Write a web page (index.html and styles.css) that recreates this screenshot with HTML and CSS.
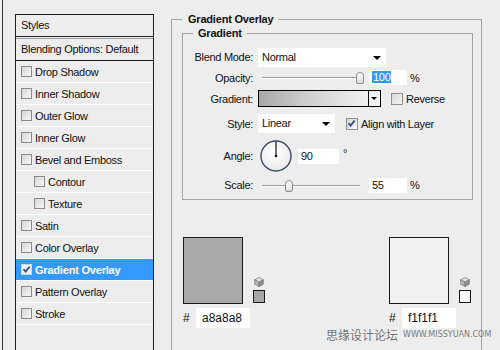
FILE: index.html
```html
<!DOCTYPE html>
<html>
<head>
<meta charset="utf-8">
<link rel="stylesheet" href="styles.css">
</head>
<body>
<div class="app">
  <aside class="sidebar">
    <div class="styles-box">
      <div class="styles-head">Styles</div>
      <div class="blend-opt">Blending Options: Default</div>
      <ul class="fx-list">
        <li class="fx"><span class="cb"></span>Drop Shadow</li>
        <li class="fx"><span class="cb"></span>Inner Shadow</li>
        <li class="fx"><span class="cb"></span>Outer Glow</li>
        <li class="fx"><span class="cb"></span>Inner Glow</li>
        <li class="fx"><span class="cb"></span>Bevel and Emboss</li>
        <li class="fx sub"><span class="cb"></span>Contour</li>
        <li class="fx sub"><span class="cb"></span>Texture</li>
        <li class="fx"><span class="cb"></span>Satin</li>
        <li class="fx"><span class="cb"></span>Color Overlay</li>
        <li class="fx active"><span class="cb checked"><svg viewBox="0 0 11 11" width="11" height="11"><path d="M2.5 5.2 L4.6 7.6 L8.6 2.6" fill="none" stroke="#3a4a8c" stroke-width="1.8"/></svg></span>Gradient Overlay</li>
        <li class="fx"><span class="cb"></span>Pattern Overlay</li>
        <li class="fx"><span class="cb"></span>Stroke</li>
      </ul>
    </div>
  </aside>
  <main class="panel">
    <fieldset class="group outer">
      <legend>Gradient Overlay</legend>
      <fieldset class="group inner">
        <legend>Gradient</legend>
        <div class="form">
          <span class="lbl">Blend Mode:</span>
          <div class="ctl"><div class="select blend">Normal<span class="arrow"></span></div></div>

          <span class="lbl">Opacity:</span>
          <div class="ctl">
            <div class="slider"><span class="track"></span><span class="thumb" style="left:98px"></span></div>
            <div class="field num"><span class="sel">100</span></div>
            <span class="unit">%</span>
          </div>

          <span class="lbl">Gradient:</span>
          <div class="ctl">
            <div class="grad-picker"><span class="grad-fill"></span><span class="grad-btn"><span class="arrow small"></span></span></div>
            <span class="cb light rev"></span><span class="cb-text">Reverse</span>
          </div>

          <span class="lbl">Style:</span>
          <div class="ctl">
            <div class="select style">Linear<span class="arrow"></span></div>
            <span class="cb light checked align"><svg viewBox="0 0 11 11" width="11" height="11"><path d="M2.5 5.2 L4.6 7.6 L8.6 2.6" fill="none" stroke="#3a4a8c" stroke-width="1.8"/></svg></span><span class="cb-text">Align with Layer</span>
          </div>

          <span class="lbl">Angle:</span>
          <div class="ctl">
            <svg class="dial" viewBox="0 0 32 32" width="32" height="32">
              <defs><radialGradient id="dg" cx="0.45" cy="0.4" r="0.7"><stop offset="0" stop-color="#ffffff"/><stop offset="1" stop-color="#e6e6e6"/></radialGradient></defs>
              <circle cx="16" cy="16" r="15" fill="url(#dg)" stroke="#3c4a68" stroke-width="1.4"/>
              <line x1="16" y1="16" x2="16" y2="1.5" stroke="#111" stroke-width="1.2"/>
              <circle cx="16" cy="16" r="1.3" fill="#111"/>
            </svg>
            <div class="field angle">90</div>
            <span class="deg">°</span>
          </div>

          <span class="lbl">Scale:</span>
          <div class="ctl">
            <div class="slider"><span class="track"></span><span class="thumb" style="left:27px"></span></div>
            <div class="field num">55</div>
            <span class="unit">%</span>
          </div>
        </div>
      </fieldset>

      <div class="stops">
        <div class="stop">
          <div class="stop-top">
            <div class="swatch big" style="background:#a8a8a8"></div>
            <div class="stop-side">
              <svg class="cube" viewBox="0 0 10 10" width="10" height="10"><path d="M5 0.5 L9.3 2.8 L5 5.1 L0.7 2.8 Z" fill="#e4e4e4" stroke="#777" stroke-width="0.7"/><path d="M0.7 2.8 L5 5.1 L5 9.6 L0.7 7.3 Z" fill="#b4b4b4" stroke="#777" stroke-width="0.7"/><path d="M9.3 2.8 L5 5.1 L5 9.6 L9.3 7.3 Z" fill="#8e8e8e" stroke="#777" stroke-width="0.7"/></svg>
              <div class="swatch small" style="background:#a8a8a8"></div>
            </div>
          </div>
          <div class="hex"><span class="hash">#</span><div class="field hexval">a8a8a8</div></div>
        </div>
        <div class="stop">
          <div class="stop-top">
            <div class="swatch big" style="background:#f1f1f1"></div>
            <div class="stop-side">
              <svg class="cube" viewBox="0 0 10 10" width="10" height="10"><path d="M5 0.5 L9.3 2.8 L5 5.1 L0.7 2.8 Z" fill="#e4e4e4" stroke="#777" stroke-width="0.7"/><path d="M0.7 2.8 L5 5.1 L5 9.6 L0.7 7.3 Z" fill="#b4b4b4" stroke="#777" stroke-width="0.7"/><path d="M9.3 2.8 L5 5.1 L5 9.6 L9.3 7.3 Z" fill="#8e8e8e" stroke="#777" stroke-width="0.7"/></svg>
              <div class="swatch small" style="background:#ffffff"></div>
            </div>
          </div>
          <div class="hex"><span class="hash">#</span><div class="field hexval">f1f1f1</div></div>
        </div>
      </div>
    </fieldset>
  </main>
  <div class="watermark"><span class="wm-cn">思缘设计论坛</span><span class="wm-url">WWW.MISSYUAN.COM</span></div>
</div>
</body>
</html>
```

FILE: styles.css
```css
* { box-sizing: border-box; }
html, body { margin: 0; padding: 0; }
body {
  background: #ededed;
  font-family: "Liberation Sans", Arial, sans-serif;
  font-size: 11px;
  letter-spacing: -0.3px;
  color: #111;
  overflow: hidden;
}
.app {
  position: relative;
  display: flex;
  width: 500px;
  height: 350px;
  overflow: hidden;
}

/* ---------- sidebar ---------- */
.sidebar {
  margin-left: 2px;
  border-left: 1px solid #3c3c3c;
  padding: 14px 0 0 12px;
  height: 350px;
}
.styles-box {
  width: 139px;
  height: 340px;
  border: 1px solid #1e1e1e;
  border-bottom: none;
}
.styles-head {
  height: 22px;
  line-height: 20px;
  padding-left: 5px;
  border-bottom: 1px solid #1e1e1e;
}
.blend-opt {
  margin-top: 1px;
  border-top: 1px solid #9a9a9a;
  height: 23px;
  line-height: 21px;
  padding-left: 5px;
  border-bottom: 1px solid #1e1e1e;
}
.fx-list { list-style: none; margin: 0; padding: 0; }
.fx {
  display: flex;
  align-items: center;
  gap: 3px;
  height: 22px;
  padding-left: 5px;
  border-bottom: 1px solid #ffffff;
  white-space: nowrap;
}
.fx.sub { padding-left: 18px; }
.fx.active {
  background: #3399ff;
  color: #fff;
  font-weight: bold;
  letter-spacing: -0.2px;
}

.cb {
  display: inline-block;
  flex: none;
  width: 11px;
  height: 11px;
  border: 1px solid #8a8a8a;
  background: linear-gradient(135deg, #d6d6d6, #f7f7f7);
  position: relative;
}
.cb svg { position: absolute; left: -1px; top: -1px; }
.fx.active .cb { background: #f4f4f4; border-color: #c8d8ee; }
.cb.light { width: 12px; height: 12px; border-color: #909090; }
.cb-text { margin-left: 3px; white-space: nowrap; }

/* ---------- panel ---------- */
.panel {
  margin-left: 17px;
  padding-top: 13px;
}
.group {
  margin: 0;
  border: 1px solid #a4a4a4;
  min-width: 0;
}
.group legend {
  font-weight: bold;
  line-height: 13px;
  height: 13px;
  color: #111;
  letter-spacing: -0.2px;
}
.outer {
  width: 311px;
  height: 400px;
  padding: 1px 8px 0 10px;
}
.outer > legend { padding: 0 5px 0 6px; }
.inner {
  padding: 7px 0 3px 0;
}
.inner > legend { margin-left: 10px; padding: 0 5px; }

.form {
  display: grid;
  grid-template-columns: 70px auto;
  grid-template-rows: 20px 21px 21px 29px 36px 22px;
  column-gap: 5px;
  align-items: center;
}
.lbl { text-align: right; white-space: nowrap; }
.ctl { display: flex; align-items: center; }

.select {
  position: relative;
  height: 19px;
  line-height: 19px;
  background: #fff;
  padding-left: 4px;
}
.select.blend { width: 128px; }
.select.style { width: 77px; }
.arrow {
  position: absolute;
  right: 5px;
  top: 8px;
  width: 0; height: 0;
  border-left: 4px solid transparent;
  border-right: 4px solid transparent;
  border-top: 4px solid #000;
}
.arrow.small {
  right: 3px;
  top: 6px;
  border-left-width: 3px;
  border-right-width: 3px;
  border-top-width: 3px;
}

.slider {
  position: relative;
  width: 108px;
  height: 15px;
  flex: none;
}
.track {
  position: absolute;
  left: 4px;
  right: 6px;
  top: 7px;
  height: 2px;
  border-top: 1px solid #9c9c9c;
  border-bottom: 1px solid #ffffff;
}
.thumb {
  position: absolute;
  top: 2px;
  width: 8px;
  height: 12px;
  border: 1px solid #8c8c8c;
  border-radius: 4px 4px 2px 2px;
  background: linear-gradient(#ffffff, #dcdcdc);
}

.field {
  height: 15px;
  line-height: 15px;
  background: #fff;
  padding-left: 3px;
  flex: none;
}
.field.num { width: 38px; margin-left: 3px; }
.sel { background: #3399ff; color: #fff; padding: 0 1px; }
.unit { margin-left: 3px; }

.grad-picker {
  display: flex;
  width: 123px;
  height: 17px;
  border: 1px solid #000;
  flex: none;
}
.grad-fill {
  flex: 1;
  background: linear-gradient(to right, #a8a8a8 0%, #cfcfcf 45%, #f1f1f1 100%);
}
.grad-btn {
  position: relative;
  width: 12px;
  border-left: 1px solid #000;
  background: #f3f3f3;
}
.rev { margin-left: 10px; }
.align { margin-left: 11px; }

.dial { margin-left: 2px; flex: none; }
.field.angle { width: 41px; margin-left: 6px; }
.deg { margin-left: 4px; align-self: flex-start; margin-top: 7px; }

/* ---------- color stops ---------- */
.stops {
  display: flex;
  justify-content: space-between;
  margin-top: 37px;
  padding: 0 2px 0 1px;
}
.stop-top {
  display: flex;
  align-items: flex-end;
  gap: 10px;
}
.swatch { border: 1px solid #1a1a1a; }
.swatch.big { width: 60px; height: 67px; }
.stop-side {
  display: flex;
  flex-direction: column;
  gap: 3px;
  margin-bottom: 1px;
}
.swatch.small { width: 12px; height: 13px; }
.cube { display: block; margin-left: 1px; }
.hex {
  display: flex;
  align-items: center;
  margin-top: 4px;
}
.hash { width: 13px; font-size: 12px; }
.field.hexval {
  width: 54px;
  height: 20px;
  line-height: 20px;
  padding-left: 6px;
  font-size: 12px;
  letter-spacing: 0;
}

/* ---------- watermark ---------- */
.watermark {
  position: absolute;
  left: 326px;
  top: 326px;
  display: flex;
  align-items: center;
  gap: 5px;
  color: #707070;
  white-space: nowrap;
  letter-spacing: 0;
}
.wm-cn {
  font-family: "Noto Sans CJK SC", sans-serif;
  font-size: 12px;
  text-shadow: 0 0 2px #fff;
}
.wm-url {
  font-family: "DejaVu Sans", sans-serif;
  font-size: 8px;
  color: #7a7a7a;
}
```
